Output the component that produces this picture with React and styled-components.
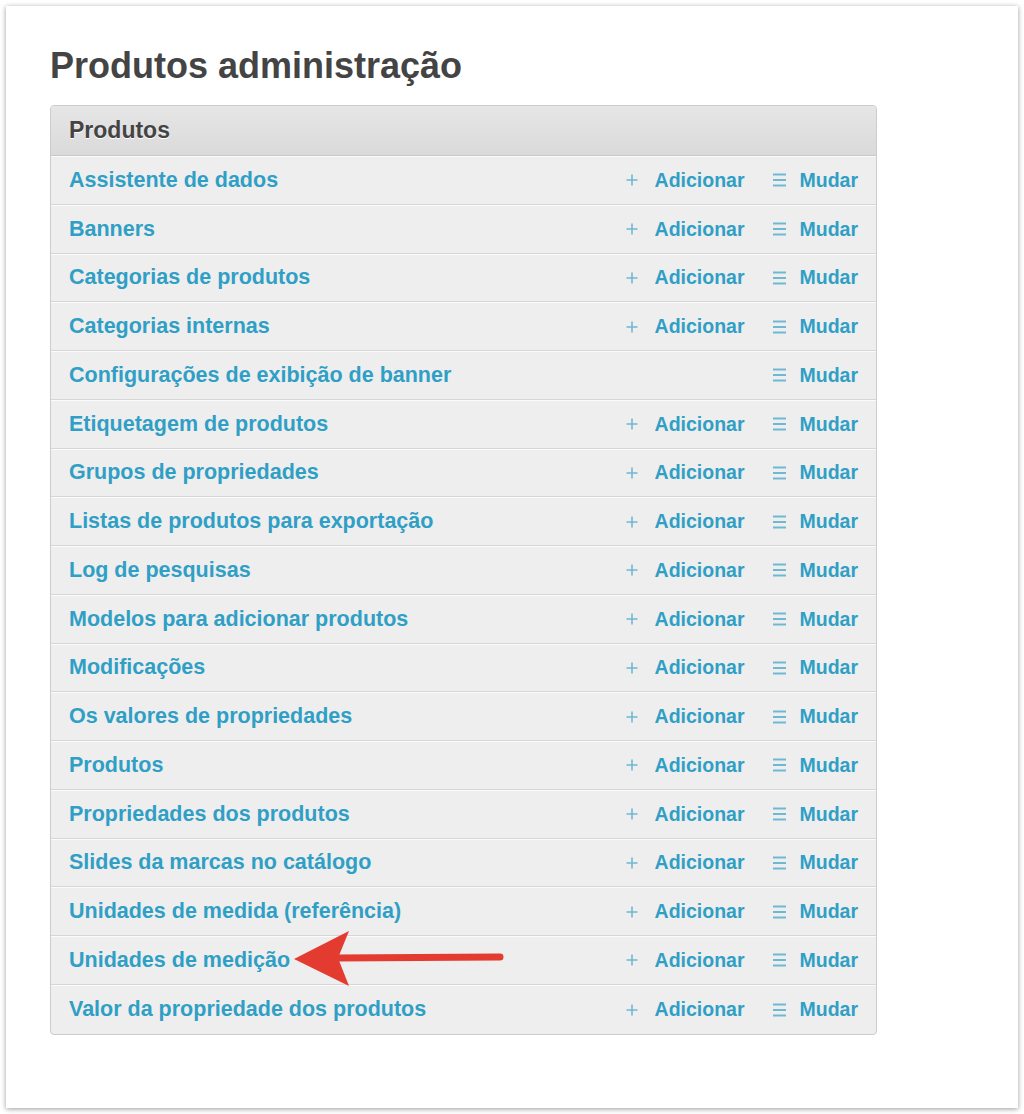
import React from "react";
import styled, { createGlobalStyle } from "styled-components";

const GlobalStyle = createGlobalStyle`
  html, body {
    margin: 0;
    padding: 0;
    background: #ffffff;
  }
  body {
    font-family: "Liberation Sans", Arial, sans-serif;
  }
`;

const models = [
  { name: "Assistente de dados", add: true },
  { name: "Banners", add: true },
  { name: "Categorias de produtos", add: true },
  { name: "Categorias internas", add: true },
  { name: "Configurações de exibição de banner", add: false },
  { name: "Etiquetagem de produtos", add: true },
  { name: "Grupos de propriedades", add: true },
  { name: "Listas de produtos para exportação", add: true },
  { name: "Log de pesquisas", add: true },
  { name: "Modelos para adicionar produtos", add: true },
  { name: "Modificações", add: true },
  { name: "Os valores de propriedades", add: true },
  { name: "Produtos", add: true },
  { name: "Propriedades dos produtos", add: true },
  { name: "Slides da marcas no catálogo", add: true },
  { name: "Unidades de medida (referência)", add: true },
  { name: "Unidades de medição", add: true },
  { name: "Valor da propriedade dos produtos", add: true },
];

const PlusIcon = () => (
  <svg width="12" height="12" viewBox="0 0 12 12">
    <path d="M6 0.5v11M0.5 6h11" stroke="#6fb8d4" strokeWidth="1.6" fill="none" />
  </svg>
);

const ListIcon = () => (
  <svg width="13" height="14" viewBox="0 0 13 14">
    <path d="M0 1.5h13M0 7h13M0 12.5h13" stroke="#6fb8d4" strokeWidth="2" fill="none" />
  </svg>
);

const Arrow = () => (
  <ArrowBox width="215" height="64" viewBox="0 0 215 64">
    <path d="M46 31 L210 30" stroke="#e43b30" strokeWidth="7" strokeLinecap="round" fill="none" />
    <path d="M4 32 L59 4 L48 31 L59 59 Z" fill="#e43b30" />
  </ArrowBox>
);

const App = () => (
  <Page>
    <GlobalStyle />
    <Panel>
      <Title>Produtos administração</Title>
      <Module>
        <Caption>Produtos</Caption>
        {models.map((m) => (
          <Row key={m.name}>
            <ModelLink href="#">{m.name}</ModelLink>
            <Actions>
              {m.add && (
                <Action href="#" $gap={17}>
                  <PlusIcon />
                  Adicionar
                </Action>
              )}
              <Action href="#" $gap={14}>
                <ListIcon />
                Mudar
              </Action>
            </Actions>
          </Row>
        ))}
      </Module>
      <Arrow />
    </Panel>
  </Page>
);

const Page = styled.div`
  padding: 6px;
  background: #ffffff;
`;

const Panel = styled.div`
  position: relative;
  box-sizing: border-box;
  width: 1012px;
  height: 1102px;
  padding: 39px 44px 0;
  background: #ffffff;
  box-shadow: 0 1px 5px rgba(0, 0, 0, 0.4);
`;

const Title = styled.h1`
  margin: 0 0 18px;
  font-size: 36px;
  line-height: 42px;
  font-weight: 700;
  color: #444444;
`;

const Module = styled.div`
  width: 827px;
  box-sizing: border-box;
  border: 1px solid #cccccc;
  border-radius: 4px;
  overflow: hidden;
  background: #eeeeee;
`;

const Caption = styled.div`
  box-sizing: border-box;
  height: 50px;
  padding: 0 18px;
  display: flex;
  align-items: center;
  font-size: 23px;
  font-weight: 700;
  color: #444444;
  text-shadow: 0 1px 0 #ffffff;
  background: linear-gradient(to bottom, #e6e6e6, #dadada);
  border-bottom: 1px solid #c8c8c8;
`;

const Row = styled.div`
  box-sizing: border-box;
  height: 48.75px;
  padding: 0 18px;
  display: flex;
  align-items: center;
  justify-content: space-between;
  border-top: 1px solid #fbfbfb;
  border-bottom: 1px solid #d6d6d6;

  &:last-child {
    border-bottom: none;
  }
`;

const ModelLink = styled.a`
  font-size: 21.5px;
  font-weight: 700;
  color: #309fc6;
  text-decoration: none;
`;

const Actions = styled.div`
  display: flex;
  align-items: center;
  gap: 28px;
`;

const Action = styled.a`
  display: flex;
  align-items: center;
  gap: ${(p) => p.$gap}px;
  font-size: 19.5px;
  font-weight: 700;
  color: #309fc6;
  text-decoration: none;
`;

const ArrowBox = styled.svg`
  position: absolute;
  left: 284px;
  top: 921px;
`;

export default App;
